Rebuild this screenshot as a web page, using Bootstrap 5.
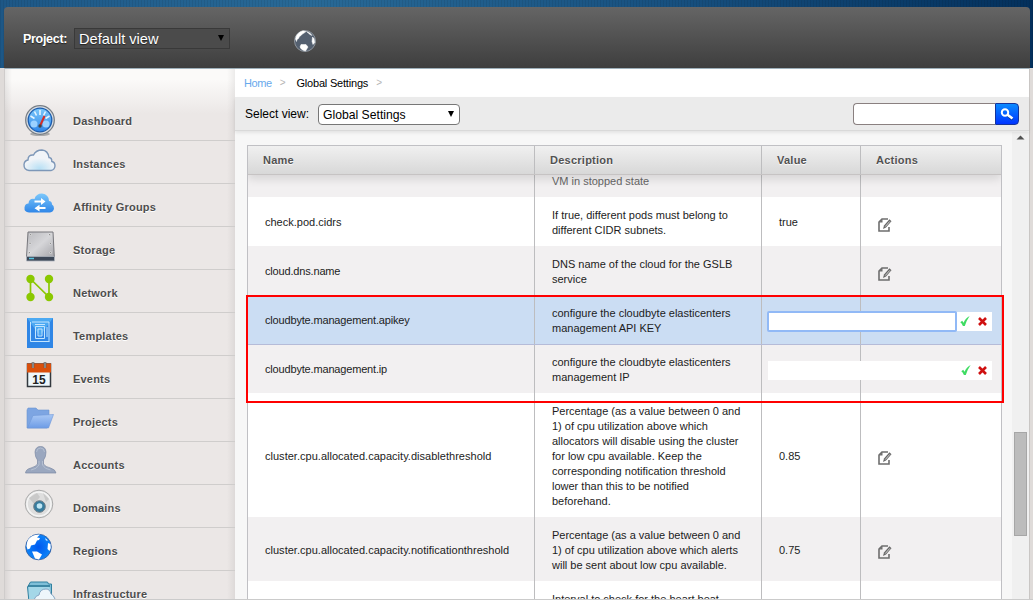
<!DOCTYPE html>
<html lang="en">
<head>
<meta charset="utf-8">
<title>Global Settings</title>
<link href="https://cdn.jsdelivr.net/npm/bootstrap@5.3.0/dist/css/bootstrap.min.css" rel="stylesheet">
<style>
body{font-family:"Liberation Sans",Arial,sans-serif;font-size:11px;line-height:15px;color:#000;height:600px;overflow:hidden;background:#e6e2e0}
.backdrop{height:600px;padding:7px 3px 0 4px;background:repeating-linear-gradient(90deg,rgba(0,0,0,.07) 0 1px,transparent 1px 3px) 0 0/100% 68px no-repeat,linear-gradient(90deg,#1d5786,#286996 30%,#17507f 65%,#03305c) 0 0/100% 68px no-repeat,#dfdbd9}
.topbar{height:61px;background:linear-gradient(#656565,#3e3e3e);border-radius:4px 4px 0 0;color:#fff}
.topbar .lbl{font-weight:700;font-size:12.500px;width:51px;margin-left:19px;margin-top:4px;letter-spacing:-.3px;text-shadow:0 1px 1px #222;white-space:nowrap}
.projsel{width:156px;height:21px;border:1px solid #393939;background:#4b4b4b;font-size:14.600px;line-height:20px;padding:0 5px 0 4px;margin-top:1px;text-shadow:0 1px 1px #222}
.globe{margin-left:63px;margin-top:7px}
.wrap{height:531px;border-top:1px solid #9eb0ba;border-left:1px solid #cfcccb;border-right:1px solid #c9c6c4}
.side{width:230px;flex:none;height:531px;overflow:hidden;background:linear-gradient(90deg,rgba(0,0,0,.07),transparent 7px,transparent 222px,rgba(0,0,0,.06)),linear-gradient(#fbfaf9 10px,#ebe7e6 45px)}
.side .it{height:43px;border-bottom:1px solid #cfcdcc;padding-left:18px}
.side .it:first-child{height:72px;padding-top:29px}
.side .it svg{width:34px;height:34px;flex:none;margin-top:3px}
.side .it:first-child svg{margin-top:5px}
.side .it:last-child svg{margin-top:5px}
.side .it span{margin:16px 0 0 16px;font-weight:700;font-size:11px;letter-spacing:.2px;color:#4d4d4d;text-shadow:0 1px 0 #fff;line-height:15px}
.main{width:794px;flex:none;background:#f7f7f7}
.crumbs{height:28px;background:#fff;padding-left:9px;line-height:28px;font-size:11px;letter-spacing:-.19px}
.crumbs a{color:#68a9ec;text-decoration:none;letter-spacing:-.4px}
.crumbs i{font-style:normal;color:#b5b5b5;font-size:10px}
.tool{height:34px;background:#ebebeb;padding:0 10px;border-bottom:1px solid #d9d9d9;box-shadow:0 2px 3px rgba(0,0,0,.08);position:relative}
.tool .lab{font-size:12px;width:73px;white-space:nowrap;padding-top:2px}
.viewsel{width:142px;height:21px;border:1px solid #777;border-radius:4px;background:#fff;font-size:12.2px;line-height:20px;padding:0 5px 0 4px;margin-top:1px}
.tri{width:0;height:0;border:3px solid transparent;border-top:6px solid #000;border-bottom:0;margin-top:6px}
.find{width:142px;height:22px;border:1px solid #8a8080;border-right:0;border-radius:4px 0 0 4px;background:#fff}
.go{width:24px;height:22px;border:1px solid #14349c;border-radius:0 4px 4px 0;background:linear-gradient(#0a8bff,#0034ff)}
.body{height:468px;padding:14px 0 0 12px;overflow:hidden}
.grid{width:755px;height:454px;border:1px solid #c0c0c4;border-bottom:0;overflow:hidden}
.hd{height:29px;background:linear-gradient(#f0f0f0,#d8d8d8);border-bottom:1px solid #c6c3c3;box-shadow:0 4px 10px rgba(0,0,0,.12);position:relative;z-index:2;font-weight:700;color:#525252;text-shadow:0 1px 1px #fff;letter-spacing:.25px;line-height:29px}
.hd>div{padding-left:15px}
.c1{width:287px}.c2{width:227px}.c3{width:99px}.c4{width:140px}
.c1,.c2,.c3{border-right:1px solid #bdbdbf}
.c1,.c2,.c3,.c4{flex:none}
.rw{background:#fff;color:#1c1c1c}
.rw.alt{background:#f2f0f1}
.rw.sel{background:#cbddf3;box-shadow:0 1px #b5bbd8;position:relative;z-index:1}
.rw>div{padding:10px 0 9px 17px;display:flex;align-items:center}
.rw>.c2{padding-top:11px;padding-bottom:8px}
.rw>.c1.tight{letter-spacing:-.17px}
.rw>.c1.low{padding-top:11px;padding-bottom:9px;letter-spacing:.02px}
.rw .c2 span{white-space:nowrap}
.rw .c3{padding-top:11px}
.rw .c4 svg{margin-top:5px}
.rw.cut{height:22px;overflow:hidden;align-items:flex-end}
.rw.cut>div{height:49px}
.rw.cut .c2 span{color:#666}
.rw .edit{padding:0;margin-left:6px;width:224px;height:20px;align-self:center;margin-right:-125px;margin-top:3px;position:relative;z-index:1}
.edit .fld{width:190px;height:19px;background:#fff}
.edit .fld.on{height:21px;border:2px solid #91b9f6;border-radius:2px;margin-left:-1px;width:190px}
.edit .ok{flex:1;height:19px;background:#fff;padding:0 5px 0 3px}
.mark-box{position:absolute;left:246px;top:295px;width:758px;height:108px;border:2px solid #f00;z-index:5}
.sbar{width:17px;height:467px;background:#f0f0f0;margin-left:10px;margin-top:-13px;padding:3px 2px 0}
.sbar .thumb{width:13px;height:104px;background:#bcbcbc;border:1px solid #a6a6a6;margin-top:292px}
.foot{position:absolute;left:0;top:599px;width:100%;height:1px;background:#cbcbcb;z-index:6}
</style>
</head>
<body>
<svg width="0" height="0" class="position-absolute">
<defs>
<linearGradient id="bl" x2="0" y2="1"><stop stop-color="#7cc8fb"/><stop offset="1" stop-color="#2f86e8"/></linearGradient>
<linearGradient id="gr" x2="1" y2="1"><stop stop-color="#b9b9bd"/><stop offset=".5" stop-color="#d6d6d9"/><stop offset="1" stop-color="#a5a5aa"/></linearGradient>
<radialGradient id="cl" cy=".9"><stop stop-color="#b8e0f5"/><stop offset="1" stop-color="#f1f4f8"/></radialGradient>
<linearGradient id="fo" x2="0" y2="1"><stop stop-color="#a9c8f5"/><stop offset="1" stop-color="#6d9ce6"/></linearGradient>
<radialGradient id="rg"><stop stop-color="#0058f0"/><stop offset="1" stop-color="#0c84f8"/></radialGradient>
<symbol id="pen" viewBox="0 0 14 14"><path d="M10 1H4L1 4V13h10V9" fill="none" stroke="#6e6e6e" stroke-width="1.600"/><path d="M1 4.500h3.500V1" fill="#6e6e6e"/><path d="M5 11l1-3.500L11.500 1.300l2 1.900L8 9.500z" fill="#666"/><path d="M7.200 8.600l4.600-5.200" stroke="#ddd" stroke-width=".9"/></symbol>
<symbol id="yes" viewBox="0 0 10 12"><path d="M.3 7.200L2.200 5.800l1.400 2Q5.500 3 9.600 1 6.800 5 4.800 11H2.900Q2 8.500.3 7.200z" fill="#3fdc63"/></symbol>
<symbol id="no" viewBox="0 0 9 9"><path d="M1 1l7 7M8 1l-7 7" stroke="#cf1010" stroke-width="2.600"/></symbol>
</defs>
</svg>
<div class="backdrop">
<header class="topbar d-flex align-items-center">
<div class="lbl">Project:</div>
<div class="projsel d-flex justify-content-between"><span>Default view</span><b class="tri"></b></div>
<svg class="globe" width="24" height="24" viewBox="0 0 24 24"><circle cx="12" cy="12" r="10.500" fill="#546070" stroke="#8d949c"/><path d="M2.500 10Q3 4 10 1.800l3 .8-2 1.500-1 .4-2 2-1.500 1-1 2-1.500 1-.5 2zM8 15.500l5 0 2 2.500-2.500 4Q8 21 7 18zM13.500 2.500q4 1 5.500 4l-2-1zM19.500 8l1.500 1.500.8 4-1.800 2-1-3z" fill="#fff" stroke="#fff" stroke-width=".5"/></svg>
</header>
<div class="wrap d-flex">
<nav class="side">
<div class="it d-flex"><svg viewBox="0 0 34 34"><ellipse cx="17" cy="31" rx="10" ry="2" fill="#aaa"/><circle cx="17" cy="17" r="14.300" fill="#d8dde2" stroke="#777e86" stroke-width="1.300"/><circle cx="17" cy="17" r="11.800" fill="url(#bl)" stroke="#1b5cae" stroke-width="1.300"/><path d="M17 7v5M11.500 8.500l2 4M22.500 8.500l-2 4M7.500 13l4 2.500M26.500 13l-4 2.500" stroke="#e6f5ff" stroke-width="1.600"/><circle cx="11" cy="21" r="3.500" fill="#9bd1ff"/><circle cx="23" cy="21" r="3.500" fill="#9bd1ff"/><path d="M17 23l4.500-10" stroke="#d92c24" stroke-width="2"/><circle cx="17" cy="23" r="1.700" fill="#444"/></svg><span>Dashboard</span></div>
<div class="it d-flex"><svg viewBox="0 0 34 34"><path d="M6 26.500Q.8 26 1 20.500 1.500 16.500 5 16 5 10.500 10.500 11 13 6 19 6q6 .5 7 7.500 3 .3 2.800 4Q32 18 32 22q-.5 4-4 4.500z" fill="url(#cl)" stroke="#7d97b8" stroke-width="1.400"/></svg><span>Instances</span></div>
<div class="it d-flex"><svg viewBox="0 0 34 34"><path d="M6 25.500Q1 25 1.500 20.500 2 16.500 5.500 16.500 6 11 11.500 12 13 6.500 19 6.500q7 1 7 7.500 3 0 3 3.500 2 1 2 4-.5 3.500-4 4z" fill="url(#bl)"/><path d="M11.500 13.500h6.500V11l4.500 3.500-4.500 3.500V15.500h-6.500zM22.500 20h-6v-2.200l-5 3.500 5 3.300v-2.500h6z" fill="#fff"/></svg><span>Affinity Groups</span></div>
<div class="it d-flex"><svg viewBox="0 0 34 34"><path d="M5 2h25l1.300 25H3.500z" fill="url(#gr)" stroke="#77777c"/><path d="M3.500 26.500h28v4.500h-28z" fill="#3c4757" stroke="#aeb5be" stroke-width=".8"/><path d="M6 28.500h5" stroke="#56c2de" stroke-width="1.500"/><path d="M7 4h1.500v1.500H7zM26 4h1.500v1.500H26zM6.300 12.500h1.500V14H6.300zM26.500 12.500H28V14h-1.500zM5.500 22H7v1.500H5.500zM27 22h1.500v1.500H27z" stroke="#eee" stroke-width=".7" fill="#111"/></svg><span>Storage</span></div>
<div class="it d-flex"><svg viewBox="0 0 34 34"><path d="M7.500 24V6L26 24V6" fill="none" stroke="#8bc800" stroke-width="1.700"/><g fill="#8bc800"><circle cx="7.500" cy="6" r="4.200"/><circle cx="26" cy="6" r="4.200"/><circle cx="7.500" cy="24" r="4.200"/><circle cx="26" cy="24" r="4.200"/></g></svg><span>Network</span></div>
<div class="it d-flex"><svg viewBox="0 0 34 34"><path d="M4 2h26v30H4z" fill="#2f86e6"/><path d="M4 2h26L17 20z" fill="#58b8f6" opacity=".7"/><path d="M7.500 6v19.500h19M9 6h17v19.500M12.500 10.500h9v12h-9zM15 13h4v7h-4zM12 8.500h10M24 11v10" fill="none" stroke="#c3e5ff"/></svg><span>Templates</span></div>
<div class="it d-flex"><svg viewBox="0 0 34 34"><path d="M4.500 5h23v22.500h-23z" fill="#eef7fb" stroke="#33393f" stroke-width="1.500"/><path d="M4 4.500h24v9H4z" fill="#d94f0c"/><path d="M10 3v6M22 3v6" stroke="#555" stroke-width="2.500"/><path d="M10 3v6M22 3v6" stroke="#ccc" stroke-width=".8"/><text x="16" y="24.500" text-anchor="middle" font-family="Liberation Sans" font-weight="700" font-size="12" fill="#222">15</text></svg><span>Events</span></div>
<div class="it d-flex"><svg viewBox="0 0 34 34"><path d="M4 26V8l1-2h8l2 2h11v6h-2v12z" fill="#7da5e2" stroke="#6b93d2" stroke-width=".6"/><path d="M4.500 26L10 13.500l20.500-1-5 13.500z" fill="url(#fo)" stroke="#6f97d8" stroke-width=".6"/></svg><span>Projects</span></div>
<div class="it d-flex"><svg viewBox="0 0 34 34"><path d="M12 7q.5-5.500 5.500-5.500T23 7q0 5-2.500 8v4q2 3 7 4 5 1.500 5.500 5H2.500q.5-4 5.500-5 5-1.500 6.500-4v-4Q12 12 12 7z" fill="#9aa7bf" stroke="#7d8aa3" stroke-width=".7"/><path d="M13.500 7q.5-4 4-4t4 4M16 16v4q-2 4-8 5M19.500 16v4q2 4 8 5" stroke="#b4bfd1" fill="none"/></svg><span>Accounts</span></div>
<div class="it d-flex"><svg viewBox="0 0 34 34"><circle cx="16" cy="16" r="13.800" fill="#dedede" stroke="#aaa"/><circle cx="16" cy="16" r="12" fill="none" stroke="#f4f4f4" stroke-width="1.600"/><path d="M6 10l8-5 3 4-6 7zM20 5l6 6-3 3z" fill="#c9c9c9"/><circle cx="16.500" cy="18.500" r="5.800" fill="#377c9e" stroke="#6f7b84"/><circle cx="16.500" cy="18" r="2.800" fill="#bfe6f4"/></svg><span>Domains</span></div>
<div class="it d-flex"><svg viewBox="0 0 34 34"><circle cx="15.500" cy="16" r="12.800" fill="url(#rg)" stroke="#31589a" stroke-width=".8"/><path d="M3.500 15Q4 6 12 4l5-.5-3 3 3 .5-1 2-2 .5-2 4-4 1-1 3-2.500 1zM9 20.500l5 0 5 3-3 5-4-1zM22 7l3 2.500-2 0zM25 12l2.500 1 .3 4-1.300 3-2-2z" fill="#fff"/></svg><span>Regions</span></div>
<div class="it d-flex"><svg viewBox="0 0 34 34"><path d="M7 36L4.500 11l3-5h17l1 2h3v28z" fill="#7fbfd8" stroke="#31809f"/><path d="M5 10h22" stroke="#277493" stroke-width="1.500"/><path d="M5.500 11h21l2 10-22 8z" fill="#a4d7e8"/><path d="M11 34q-2-14 5-15 1-6 7-6 4 0 5 5 5 2 6 16z" fill="#eef6fb" stroke="#86a6c4"/></svg><span>Infrastructure</span></div>
</nav>
<main class="main">
<div class="crumbs d-flex"><a href="#">Home</a><i class="ms-2">&gt;</i><span style="margin-left:11px">Global Settings</span><i class="ms-2">&gt;</i></div>
<div class="tool d-flex align-items-center">
<div class="lab">Select view:</div>
<div class="viewsel d-flex justify-content-between"><span>Global Settings</span><b class="tri"></b></div>
<div class="find ms-auto"></div>
<div class="go d-flex align-items-center justify-content-center"><svg width="14" height="14" viewBox="0 0 14 14"><path d="M7.500 8.500l5 4" stroke="#023" stroke-width="2.800" opacity=".5"/><circle cx="5" cy="5.500" r="3.200" fill="none" stroke="#fff" stroke-width="2"/><path d="M7.200 7.500l5.300 4" stroke="#fff" stroke-width="2.600"/></svg></div>
</div>
<div class="body d-flex">
<div class="grid">
<div class="hd d-flex"><div class="c1">Name</div><div class="c2">Description</div><div class="c3">Value</div><div class="c4">Actions</div></div>
<div class="rw alt cut d-flex"><div class="c1"></div><div class="c2"><span>&nbsp;<br>VM in stopped state</span></div><div class="c3"></div><div class="c4"></div></div>
<div class="rw d-flex"><div class="c1">check.pod.cidrs</div><div class="c2"><span>If true, different pods must belong to<br>different CIDR subnets.</span></div><div class="c3">true</div><div class="c4"><svg width="14" height="14"><use href="#pen"/></svg></div></div>
<div class="rw alt d-flex"><div class="c1 tight">cloud.dns.name</div><div class="c2"><span>DNS name of the cloud for the GSLB<br>service</span></div><div class="c3"></div><div class="c4"><svg width="14" height="14"><use href="#pen"/></svg></div></div>
<div class="rw sel d-flex"><div class="c1 tight">cloudbyte.management.apikey</div><div class="c2"><span>configure the cloudbyte elasticenters<br>management API KEY</span></div><div class="c3 p-0"><div class="edit d-flex flex-shrink-0 align-items-center"><div class="fld on"></div><div class="ok d-flex align-items-center justify-content-between"><svg width="10" height="12"><use href="#yes"/></svg><svg width="9" height="9"><use href="#no"/></svg></div></div></div><div class="c4"></div></div>
<div class="rw alt d-flex"><div class="c1 tight">cloudbyte.management.ip</div><div class="c2"><span>configure the cloudbyte elasticenters<br>management IP</span></div><div class="c3 p-0"><div class="edit d-flex flex-shrink-0 align-items-center"><div class="fld"></div><div class="ok d-flex align-items-center justify-content-between"><svg width="10" height="12"><use href="#yes"/></svg><svg width="9" height="9"><use href="#no"/></svg></div></div></div><div class="c4"></div></div>
<div class="rw d-flex"><div class="c1 low">cluster.cpu.allocated.capacity.disablethreshold</div><div class="c2"><span>Percentage (as a value between 0 and<br>1) of cpu utilization above which<br>allocators will disable using the cluster<br>for low cpu available. Keep the<br>corresponding notification threshold<br>lower than this to be notified<br>beforehand.</span></div><div class="c3">0.85</div><div class="c4"><svg width="14" height="14"><use href="#pen"/></svg></div></div>
<div class="rw alt d-flex"><div class="c1 low">cluster.cpu.allocated.capacity.notificationthreshold</div><div class="c2"><span>Percentage (as a value between 0 and<br>1) of cpu utilization above which alerts<br>will be sent about low cpu available.</span></div><div class="c3">0.75</div><div class="c4"><svg width="14" height="14"><use href="#pen"/></svg></div></div>
<div class="rw d-flex"><div class="c1"></div><div class="c2"><span>Interval to check for the heart beat</span></div><div class="c3"></div><div class="c4"></div></div>
</div>
<div class="sbar"><svg class="d-block" width="13" height="5" viewBox="0 0 13 5"><path d="M2.500 4.500L6.500.5l4 4z" fill="#505050"/></svg><div class="thumb"></div></div>
</div>
</main>
</div>
</div>
<div class="mark-box"></div>
<div class="foot"></div>
<script src="https://cdn.jsdelivr.net/npm/bootstrap@5.3.0/dist/js/bootstrap.bundle.min.js"></script>
</body>
</html>
